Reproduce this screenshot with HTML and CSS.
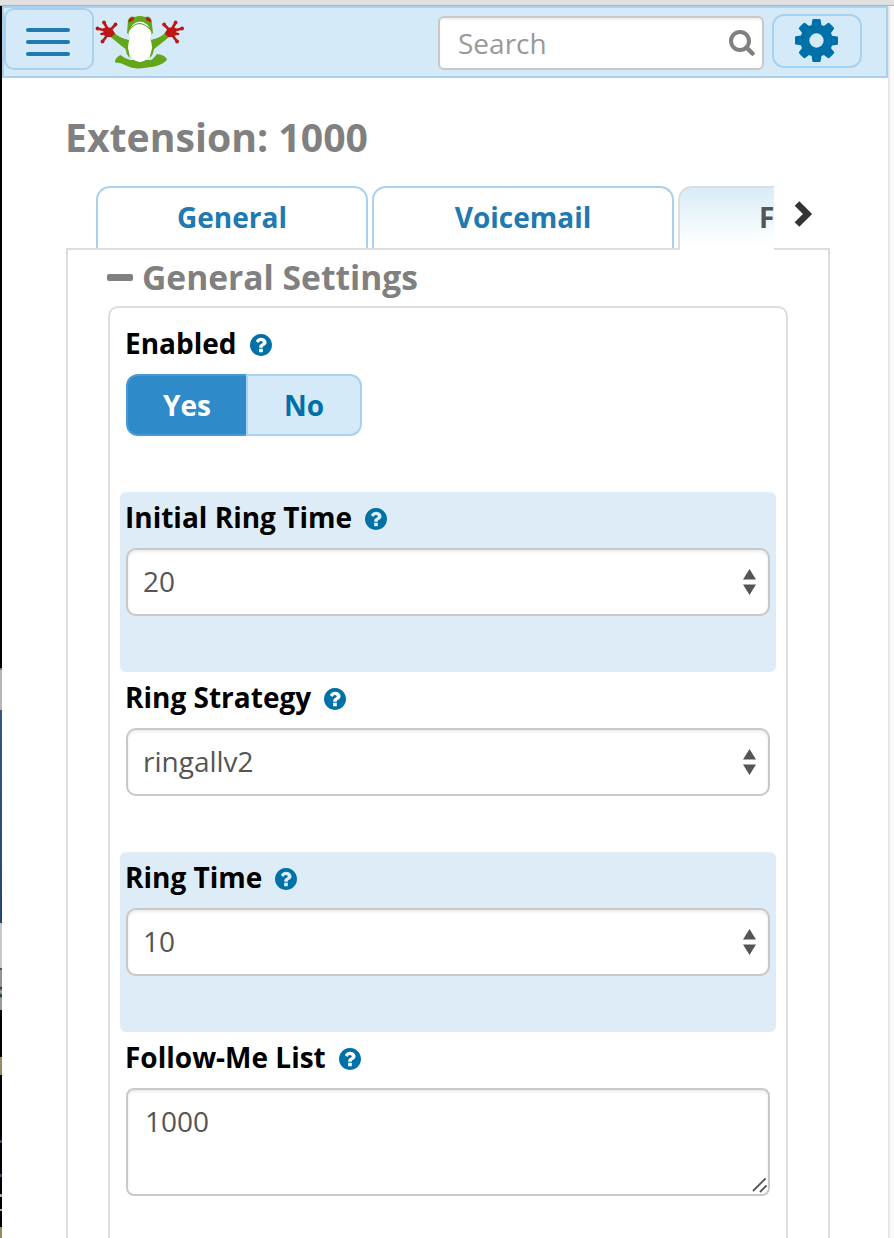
FILE: index.html
```html
<!DOCTYPE html>
<html lang="en">
<head>
<meta charset="utf-8">
<title>Extension: 1000</title>
<link rel="stylesheet" href="styles.css">
</head>
<body>
<svg class="defs" width="0" height="0">
  <symbol id="help" viewBox="128 128 1536 1536"><path d="M1024 1376v-192q0-14-9-23t-23-9h-192q-14 0-23 9t-9 23v192q0 14 9 23t23 9h192q14 0 23-9t9-23zM1280 704q0-88-55.5-163t-138.5-116-170-41q-243 0-371 213-15 24 8 42l132 100q7 6 19 6 16 0 25-12 53-68 86-92 34-24 86-24 48 0 85.5 26t37.5 59q0 38-20 61t-68 45q-63 28-115.5 86.5t-52.5 125.5v36q0 14 9 23t23 9h192q14 0 23-9t9-23q0-19 21.5-49.5t54.5-49.5q32-18 49-28.5t46-35 44.5-48 28-60.5 12.5-81zM1664 896q0 209-103 385.5t-279.5 279.5-385.5 103-385.5-103-279.5-279.5-103-385.5 103-385.5 279.5-279.5 385.5-103 385.5 103 279.5 279.5 103 385.5z"/></symbol>
  <symbol id="arrows" viewBox="0 0 13 26"><path d="M6.500 0L13 10.500H0zM0 15.500h13L6.500 26z"/></symbol>
</svg>
<div class="window-top"></div>
<div class="window">
  <div class="edge"></div>
  <div class="page">
    <nav class="navbar">
      <button class="menu"><span class="bar"></span><span class="bar"></span><span class="bar"></span></button>
      <svg class="logo" viewBox="95 14 90 56">
        <path fill="#63a619" d="M120.500 55Q114.500 58 115 62.500Q121 62 127 66Q134 70 147 67.500Q161 66.500 167 60Q166 55 157 54Q155 57 151.500 60H130Q124 58 120.500 55Z"/>
        <g id="side">
          <path fill="#63a619" d="M110 36.500L114 32.500Q119 38 129 40L129.500 58Q126 54 125.500 49Q119 44 110 36.500Z"/>
          <path d="M109 31.500L104 22.500M109 31.500L97.500 28.500M109 31.500L115.500 24.500M109 33L102.500 41.500M107 33L101.500 34" fill="none" stroke="#bd1616" stroke-linecap="round" stroke-width="2.600"/>
          <path fill="#bd1616" d="M103 28.500L107 27L111 28L113.500 31L115 33.500L111.500 37L108 37L104 35.500Z"/>
          <circle cx="104" cy="22.500" r="1.900" fill="#bd1616"/>
          <circle cx="97.500" cy="28.500" r="1.900" fill="#bd1616"/>
          <circle cx="115.500" cy="24.500" r="1.900" fill="#bd1616"/>
          <circle cx="102.500" cy="41.500" r="1.900" fill="#bd1616"/>
        </g>
        <use href="#side" transform="translate(279.600 0) scale(-1 1)"/>
        <path fill="#63a619" d="M127 33L128 20Q130 15 135 17Q139.500 15 145 17Q150 15 151.500 20L153 33L149 36H131Z"/>
        <path fill="#fff" d="M128.500 33Q131 22.500 140 21.500Q149 22.500 151.500 33L150 38Q152 43 152 48Q150 61 140 62Q130 61 128 48Q128 43 130 38Z"/>
        <path fill="none" stroke="#63a619" stroke-width="1.200" d="M129 30Q134 24 139.500 23.500Q145 24 151 30"/>
        <path fill="#bd1616" d="M128.500 22.500Q128.500 17 134 17.500Q134.500 20.500 128.500 22.500ZM151.200 22.500Q151.200 17 145.700 17.500Q145.200 20.500 151.200 22.500Z"/>
      </svg>
      <div class="search"><span>Search</span>
        <svg class="search-icon" viewBox="0 0 26 26" fill="none" stroke="#808080"><circle cx="11" cy="11" r="9" stroke-width="4"/><path d="M17.500 17.500L23.500 23.500" stroke-width="4.500" stroke-linecap="round"/></svg>
      </div>
      <button class="settings"><svg viewBox="128 128 1536 1536"><path d="M1152 896q0-106-75-181t-181-75-181 75-75 181 75 181 181 75 181-75 75-181zm512-109v222q0 12-8 23t-20 13l-185 28q-19 54-39 91 35 50 107 138 10 12 10 25t-9 23q-27 37-99 108t-94 71q-12 0-26-9l-138-108q-44 23-91 38-16 136-29 186-7 28-36 28h-222q-14 0-24.500-8.500t-11.500-21.500l-28-184q-49-16-90-37l-141 107q-10 9-25 9-14 0-25-11-126-114-165-168-7-10-7-23 0-12 8-23 15-21 51-66.500t54-70.500q-27-50-41-99l-183-27q-13-2-21-12.500t-8-23.500v-222q0-12 8-23t19-13l186-28q14-46 39-92-40-57-107-138-10-12-10-24 0-10 9-23 26-36 98.500-107.500t94.500-71.500q13 0 26 10l138 107q44-23 91-38 16-136 29-186 7-28 36-28h222q14 0 24.500 8.500t11.500 21.500l28 184q49 16 90 37l142-107q9-9 24-9 13 0 25 10 129 119 165 170 7 8 7 22 0 12-8 23-15 21-51 66.500t-54 70.500q26 50 41 98l183 28q13 2 21 12.500t8 23.500z"/></svg></button>
    </nav>
    <main class="content">
      <h1 class="title">Extension: 1000</h1>
      <div class="tabs">
        <div class="tab-strip">
          <a class="tab tab-general">General</a>
          <a class="tab tab-voicemail">Voicemail</a>
          <a class="tab tab-active">F</a>
        </div>
        <svg class="next" viewBox="0 0 20 28"><path d="M3 3.500L13.500 14L3 24.500" fill="none" stroke="#333" stroke-width="6.500"/></svg>
      </div>
      <section class="panel">
        <h2 class="section-title"><span class="minus"></span>General Settings</h2>
        <div class="fieldset">
          <div class="row row-first">
            <div class="label">Enabled<svg class="help"><use href="#help"/></svg></div>
            <div class="toggle"><span class="yes">Yes</span><span class="no">No</span></div>
          </div>
          <div class="row shaded">
            <div class="label">Initial Ring Time<svg class="help"><use href="#help"/></svg></div>
            <div class="select"><span>20</span><svg class="arrows"><use href="#arrows"/></svg></div>
          </div>
          <div class="row">
            <div class="label">Ring Strategy<svg class="help"><use href="#help"/></svg></div>
            <div class="select"><span>ringallv2</span><svg class="arrows"><use href="#arrows"/></svg></div>
          </div>
          <div class="row shaded">
            <div class="label">Ring Time<svg class="help"><use href="#help"/></svg></div>
            <div class="select"><span>10</span><svg class="arrows"><use href="#arrows"/></svg></div>
          </div>
          <div class="row">
            <div class="label">Follow-Me List<svg class="help"><use href="#help"/></svg></div>
            <div class="textarea"><span>1000</span><svg class="grip" viewBox="0 0 16 16"><path d="M1.500 13.500L13 2M8.500 14.500L14 9" stroke="#555" stroke-width="1.800" stroke-linecap="round"/></svg></div>
          </div>
        </div>
      </section>
    </main>
  </div>
  <div class="scrollbar"></div>
</div>
</body>
</html>
```
FILE: styles.css
```css
* { box-sizing: border-box; }
body {
  margin: 0;
  height: 1238px;
  overflow: hidden;
  background: #fff;
  font-family: "Open Sans", sans-serif;
  font-size: 28px;
  color: #000;
}
svg { display: block; flex: none; }
button { padding: 0; font: inherit; }
.defs { position: absolute; }
.window-top { height: 6px; background: #e1e1e1; border-bottom: 1px solid #b2b2b2; }
.window { display: flex; height: 1232px; }
.edge {
  width: 2px;
  background: linear-gradient(#000 662px, #777 662px, #777 664px, #b5b5b5 664px, #b5b5b5 704px,
    #38557c 704px, #28466b 917px, #c8c8c8 917px, #c8c8c8 962px, #555 962px, #555 964px,
    #959595 964px, #959595 981px, #123 981px, #9bb 986px, #123 990px, #999 992px, #999 1004px,
    #000 1004px, #000 1051px, #998866 1051px, #998866 1069px, #000 1069px, #000 1134px,
    #446 1134px, #446 1137px, #000 1137px, #000 1168px, #446 1168px, #446 1171px, #000 1171px,
    #000 1188px, #aaa 1188px, #aaa 1191px, #000 1191px, #000 1203px, #aaa 1203px, #aaa 1205px,
    #000 1205px, #000 1221px, #998866 1221px);
}
.page { flex: 1; overflow: hidden; }
.scrollbar { width: 6px; background: #fafafa; border-left: 2px solid #e7e7e7; }

.navbar {
  display: flex;
  height: 72px;
  background: #d5eaf8;
  border: 2px solid #a9d0ec;
}
.menu {
  display: flex;
  flex-direction: column;
  align-items: center;
  justify-content: center;
  gap: 8px;
  width: 90px;
  height: 62px;
  padding: 6px 2px 0 0;
  background: none;
  border: 2px solid #a9d0ec;
  border-radius: 10px;
}
.bar { width: 44px; height: 4px; border-radius: 2px; background: #2079b0; }
.logo { width: 90px; height: 56px; margin: 6px 0 0 1px; }
.search {
  display: flex;
  align-items: center;
  justify-content: space-between;
  width: 326px;
  height: 54px;
  margin: 8px 0 0 253px;
  padding: 0 7px 0 18px;
  background: #fff;
  border: 2px solid #c8c8c8;
  border-radius: 6px;
  box-shadow: inset 0 2px 2px rgba(0, 0, 0, .06);
  color: #999;
}
.search-icon { width: 26px; height: 26px; }
.settings {
  display: flex;
  justify-content: center;
  width: 90px;
  height: 54px;
  margin: 6px 0 0 8px;
  padding: 3px 1px 0 0;
  background: none;
  border: 2px solid #a8d1f0;
  border-radius: 12px;
}
.settings svg { width: 43px; height: 43px; fill: #0070a8; }

.content { padding: 30px 58px 0 64px; }
.title { margin: 0 0 0 -1px; height: 60px; line-height: 58px; font-size: 39.2px; font-weight: 700; color: #808080; }
.tabs { display: flex; height: 62px; margin: 18px 0 0 30px; }
.tab-strip { display: flex; gap: 4px; width: 678px; height: 64px; overflow: hidden; position: relative; z-index: 1; }
.tab {
  flex: none;
  height: 62px;
  line-height: 59px;
  text-align: center;
  font-weight: 700;
  color: #2079b0;
  background: #fff;
  border: 2px solid #a9d0ec;
  border-bottom: 0;
  border-radius: 14px 14px 0 0;
}
.tab-general { width: 272px; }
.tab-voicemail { width: 302px; }
.tab-active {
  width: 430px;
  height: 64px;
  padding-left: 79px;
  text-align: left;
  color: #555;
  border-color: #ddd;
  background: linear-gradient(#d8ecf7, #fff 56px);
}
.next { width: 20px; height: 28px; margin: 14px 0 0 20px; }
.panel { height: 1100px; padding: 0 40px; border: 2px solid #ddd; }
.section-title {
  display: flex;
  align-items: center;
  gap: 9px;
  height: 56px;
  margin: 0;
  padding-bottom: 2px;
  font-size: 33.6px;
  line-height: 54px;
  font-weight: 700;
  color: #808080;
}
.minus { width: 26px; height: 7px; margin-left: -1px; border-radius: 2px; background: #808080; }
.fieldset { height: 1000px; padding: 10px; border: 2px solid #ddd; border-radius: 10px; }
.row { height: 180px; padding: 0 6px; border-radius: 6px; }
.row-first { height: 174px; }
.shaded { background: #deecf7; }
.label { display: flex; align-items: center; gap: 13px; height: 56px; padding-bottom: 6px; margin-left: -1px; font-weight: 700; }
.help { width: 22px; height: 22px; margin-top: 4px; fill: #0070a8; }
.toggle { display: flex; height: 62px; line-height: 58px; font-weight: 700; text-align: center; }
.yes { width: 120px; height: 62px; border: 2px solid #4599d5; border-right: 0; border-radius: 12px 0 0 12px; background: #2f8aca; color: #fff; }
.no { width: 116px; height: 62px; border: 2px solid #a9d1f0; border-radius: 0 12px 12px 0; background: #d5eaf8; color: #0070a8; }
.select, .textarea {
  display: flex;
  justify-content: space-between;
  background: #fff;
  border: 2px solid #c8c8c8;
  border-radius: 10px;
  box-shadow: inset 0 2px 3px rgba(0, 0, 0, .08);
  color: #555;
}
.select { align-items: center; height: 68px; padding: 0 12px 2px 15px; }
.arrows { width: 13px; height: 26px; margin-top: 2px; fill: #555; }
.textarea { height: 108px; padding: 0 0 0 17px; line-height: 62px; border-radius: 8px; }
.grip { align-self: flex-end; width: 16px; height: 16px; margin: 0 0 1px 0; }
```
